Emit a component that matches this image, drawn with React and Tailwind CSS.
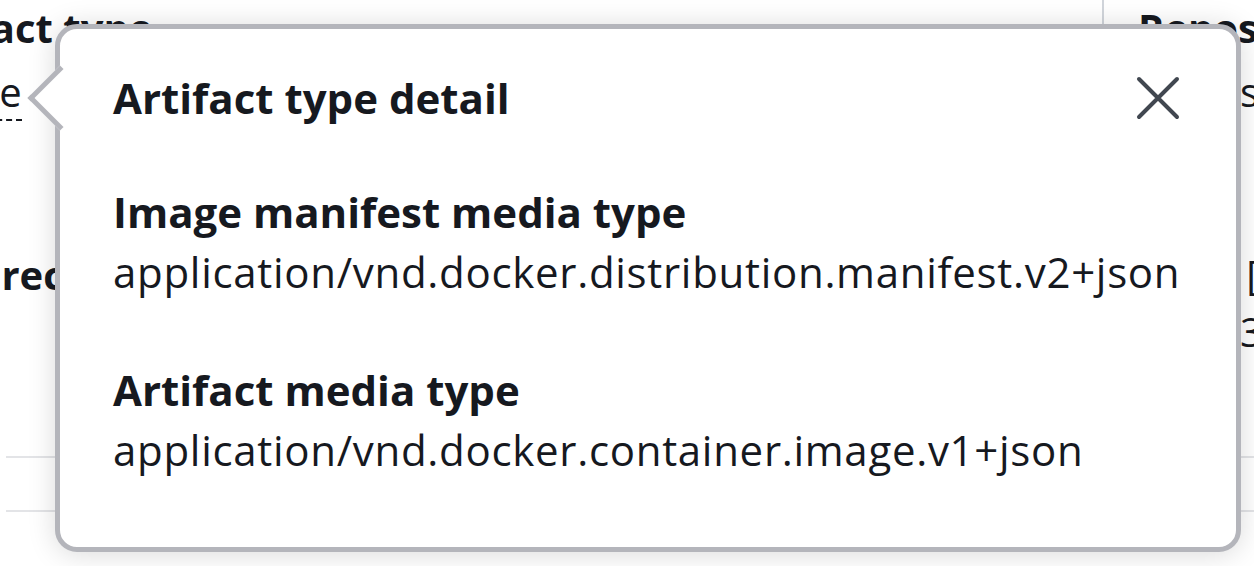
import { useState } from "react";

const font = { fontFamily: '"Open Sans", "Noto Sans", sans-serif' };

const CloseIcon = () => (
  <svg width="44" height="44" viewBox="0 0 44 44" fill="none">
    <path d="M3 3 L41 41 M41 3 L3 41" stroke="#414750" strokeWidth="4" strokeLinecap="round" />
  </svg>
);

const Field = ({ label, value, className = "" }) => (
  <div className={className}>
    <div className="text-[42px] font-bold leading-[60px] text-[#16191f]">{label}</div>
    <div className="text-[42px] leading-[60px] tracking-[0.7px] text-[#16191f]">{value}</div>
  </div>
);

const App = () => {
  const [open, setOpen] = useState(true);

  return (
    <div className="relative h-[566px] w-[1254px] overflow-hidden bg-white text-[#16191f]" style={font}>
      {/* page behind the popover */}
      <div className="flex h-[456px]">
        <div className="w-[1102px] shrink-0">
          <div className="-ml-[93px] -mt-[1px] flex flex-col">
            <div className="-ml-[7px] text-[40px] font-bold leading-[57px]">Artifact type</div>
            <div className="mt-[7px] text-[40px] leading-[57px]">
              <span className="border-b-2 border-dashed border-[#16191f]">Image</span>
            </div>
            <div className="mt-[126px] text-[40px] font-bold leading-[57px]">Last recorded pull time</div>
          </div>
        </div>
        <div className="flex flex-col">
          <div className="-mt-[1px] h-[58px] border-l-2 border-[#d1d5db] pl-[34px] text-[40px] font-bold leading-[57px]">
            Repository
          </div>
          <div className="mt-[6px] pl-[30px] text-[40px] leading-[57px]">demos</div>
          <div className="mt-[126px] pl-[36px] text-[40px] leading-[57px]">
            <div>Oct 4 [IST]</div>
            <div>1 2023</div>
          </div>
        </div>
      </div>
      <div className="ml-[6px] h-[56px] border-y-2 border-[#e3e4e7]" />

      {/* popover */}
      {open && (
        <div className="absolute left-[55px] top-[24px] h-[528px] w-[1186px] rounded-[22px] border-[5px] border-[#b4b5bb] bg-white shadow-[0_2px_28px_rgba(0,0,0,0.15)]">
          <div className="absolute left-[-23px] top-[46px] h-[46px] w-[46px] rotate-45 border-b-[5px] border-l-[5px] border-[#b4b5bb] bg-white" />
          <div className="relative pl-[53px] pr-[56px] pt-[40px]">
            <div className="flex items-center justify-between">
              <h2 className="text-[42px] font-bold leading-[57px]">Artifact type detail</h2>
              <button onClick={() => setOpen(false)} className="flex h-[44px] w-[44px] items-center justify-center">
                <CloseIcon />
              </button>
            </div>
            <Field
              className="mt-[56px]"
              label="Image manifest media type"
              value="application/vnd.docker.distribution.manifest.v2+json"
            />
            <Field
              className="mt-[58px]"
              label="Artifact media type"
              value="application/vnd.docker.container.image.v1+json"
            />
          </div>
        </div>
      )}
    </div>
  );
};

export default App;
